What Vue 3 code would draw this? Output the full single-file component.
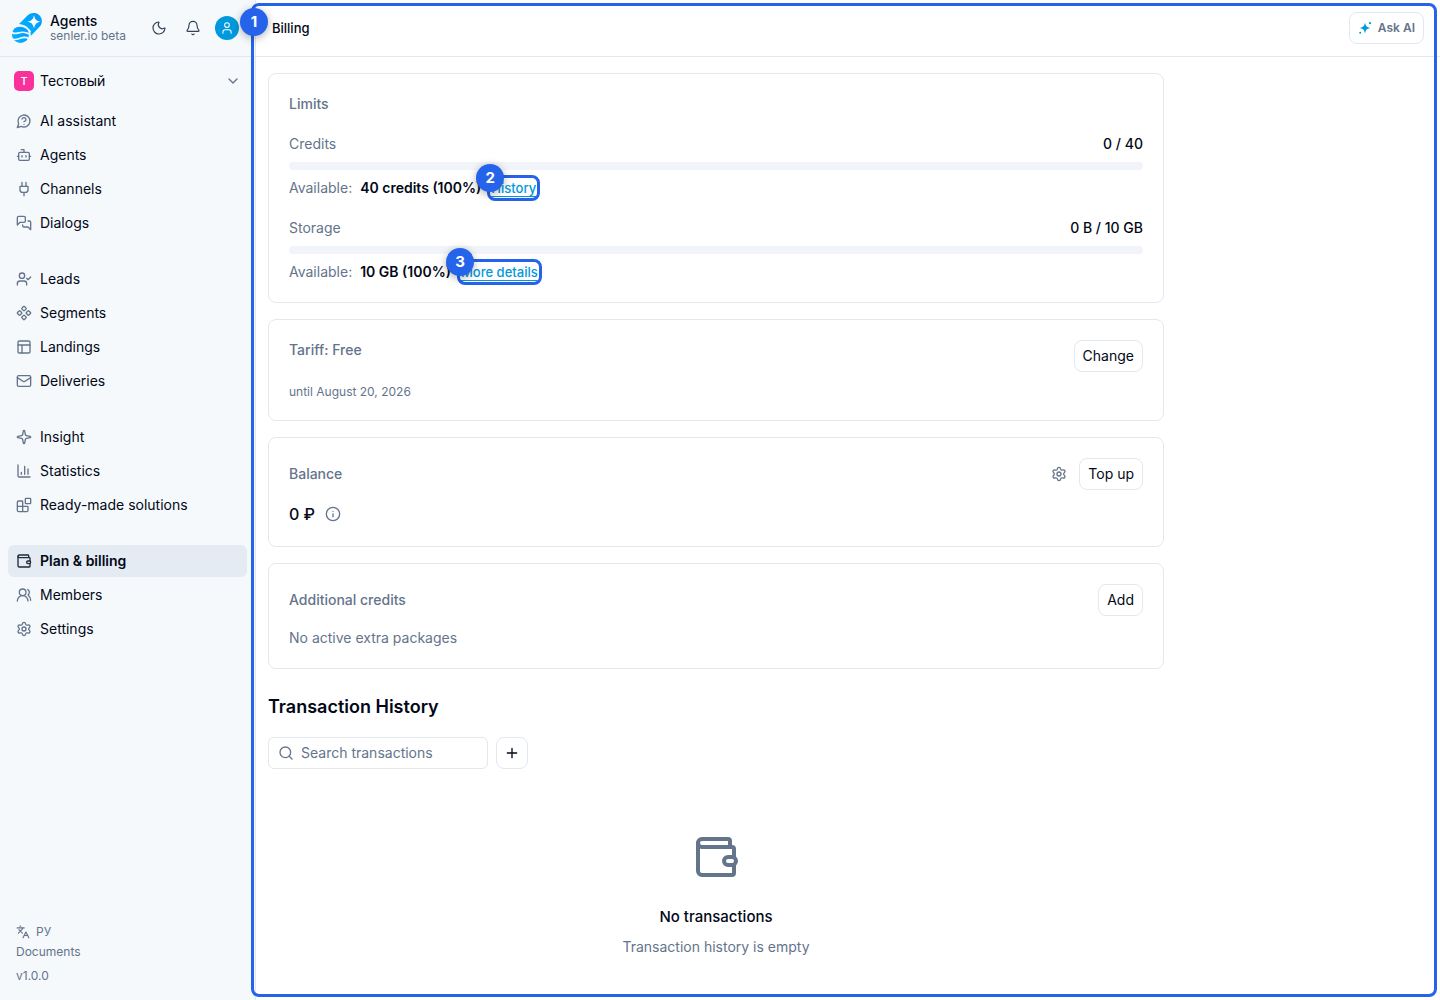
<script setup>
import { ref } from 'vue';

const search = ref('');

const icons = {
  assistant: '<path d="M7.9 20A9 9 0 1 0 4 16.1L2 22Z"/><path d="M9.09 9a3 3 0 0 1 5.83 1c0 2-3 3-3 3"/><path d="M12 17h.01"/>',
  agents: '<path d="M12 8V4H8"/><rect width="16" height="12" x="4" y="8" rx="2"/><path d="M2 14h2M20 14h2M15 13v2M9 13v2"/>',
  channels: '<path d="M12 22v-5M9 8V2M15 8V2M18 8v5a4 4 0 0 1-4 4h-4a4 4 0 0 1-4-4V8Z"/>',
  dialogs: '<path d="M14 9a2 2 0 0 1-2 2H6l-4 4V4a2 2 0 0 1 2-2h8a2 2 0 0 1 2 2z"/><path d="M18 9h2a2 2 0 0 1 2 2v11l-4-4h-6a2 2 0 0 1-2-2v-1"/>',
  leads: '<path d="m16 11 2 2 4-4M16 21v-2a4 4 0 0 0-4-4H6a4 4 0 0 0-4 4v2"/><circle cx="9" cy="7" r="4"/>',
  segments: '<path d="M15.536 11.293a1 1 0 0 0 0 1.414l2.376 2.377a1 1 0 0 0 1.414 0l2.377-2.377a1 1 0 0 0 0-1.414l-2.377-2.377a1 1 0 0 0-1.414 0zM2.297 11.293a1 1 0 0 0 0 1.414l2.377 2.377a1 1 0 0 0 1.414 0l2.377-2.377a1 1 0 0 0 0-1.414L6.088 8.916a1 1 0 0 0-1.414 0zM8.916 17.912a1 1 0 0 0 0 1.415l2.377 2.376a1 1 0 0 0 1.414 0l2.377-2.376a1 1 0 0 0 0-1.415l-2.377-2.376a1 1 0 0 0-1.414 0zM8.916 4.674a1 1 0 0 0 0 1.414l2.377 2.376a1 1 0 0 0 1.414 0l2.377-2.376a1 1 0 0 0 0-1.414l-2.377-2.377a1 1 0 0 0-1.414 0z"/>',
  landings: '<rect width="18" height="18" x="3" y="3" rx="2"/><path d="M3 9h18M9 21V9"/>',
  deliveries: '<rect width="20" height="16" x="2" y="4" rx="2"/><path d="m22 7-8.97 5.7a1.94 1.94 0 0 1-2.06 0L2 7"/>',
  insight: '<path d="M11.017 2.814a1 1 0 0 1 1.966 0l1.051 5.558a2 2 0 0 0 1.594 1.594l5.558 1.051a1 1 0 0 1 0 1.966l-5.558 1.051a2 2 0 0 0-1.594 1.594l-1.051 5.558a1 1 0 0 1-1.966 0l-1.051-5.558a2 2 0 0 0-1.594-1.594l-5.558-1.051a1 1 0 0 1 0-1.966l5.558-1.051a2 2 0 0 0 1.594-1.594z"/>',
  statistics: '<path d="M3 3v16a2 2 0 0 0 2 2h16M13 17V5M18 17V9M8 17v-3"/>',
  solutions: '<path d="M10 22V7a1 1 0 0 0-1-1H4a2 2 0 0 0-2 2v12a2 2 0 0 0 2 2h12a2 2 0 0 0 2-2v-5a1 1 0 0 0-1-1H2"/><rect width="8" height="8" x="14" y="2" rx="1"/>',
  wallet: '<path d="M21 12V8a1 1 0 0 0-1-1H5a2 2 0 0 1 0-4h13a1 1 0 0 1 1 1v3"/><path d="M3 5v14a2 2 0 0 0 2 2h15a1 1 0 0 0 1-1v-4"/><rect width="6" height="4" x="16" y="12" rx="2"/>',
  members: '<path d="M18 21a8 8 0 0 0-16 0"/><circle cx="10" cy="8" r="5"/><path d="M22 20c0-3.37-2-6.5-4-8a5 5 0 0 0-.45-8.3"/>',
  settings: '<path d="M9.671 4.136a2.34 2.34 0 0 1 4.659 0 2.34 2.34 0 0 0 3.319 1.915 2.34 2.34 0 0 1 2.33 4.033 2.34 2.34 0 0 0 0 3.831 2.34 2.34 0 0 1-2.33 4.033 2.34 2.34 0 0 0-3.319 1.915 2.34 2.34 0 0 1-4.659 0 2.34 2.34 0 0 0-3.32-1.915 2.34 2.34 0 0 1-2.33-4.033 2.34 2.34 0 0 0 0-3.831A2.34 2.34 0 0 1 6.35 6.051a2.34 2.34 0 0 0 3.319-1.915"/><circle cx="12" cy="12" r="3"/>',
};

const navGroups = [
  [
    { label: 'AI assistant', icon: 'assistant' },
    { label: 'Agents', icon: 'agents' },
    { label: 'Channels', icon: 'channels' },
    { label: 'Dialogs', icon: 'dialogs' },
  ],
  [
    { label: 'Leads', icon: 'leads' },
    { label: 'Segments', icon: 'segments' },
    { label: 'Landings', icon: 'landings' },
    { label: 'Deliveries', icon: 'deliveries' },
  ],
  [
    { label: 'Insight', icon: 'insight' },
    { label: 'Statistics', icon: 'statistics' },
    { label: 'Ready-made solutions', icon: 'solutions' },
  ],
  [
    { label: 'Plan & billing', icon: 'wallet', active: true },
    { label: 'Members', icon: 'members' },
    { label: 'Settings', icon: 'settings' },
  ],
];

const limits = [
  { name: 'Credits', value: '0 / 40', used: 0, available: '40 credits (100%)', link: 'History', mark: 2 },
  { name: 'Storage', value: '0 B / 10 GB', used: 0, available: '10 GB (100%)', link: 'More details', mark: 3 },
];
</script>

<template>
  <div class="layout">
    <aside class="sidebar">
      <div class="brand">
        <svg class="logo" viewBox="0 0 30 30" aria-hidden="true">
          <defs>
            <linearGradient id="logo-fill" x1="0" y1="1" x2="1" y2="0">
              <stop offset="0" stop-color="#00b7ff" />
              <stop offset="1" stop-color="#0098ff" />
            </linearGradient>
          </defs>
          <path fill="url(#logo-fill)" d="M7 11 15 3C18-.3 23-.8 26.400 1.600c4 2.800 4.600 8.300 1.400 12L18.800 23c.4-6-3.800-11.500-11.800-12Z" />
          <circle cx="8.500" cy="21.500" r="8.500" fill="url(#logo-fill)" />
          <path d="M1 14.500c5.500-3 13.500-2 17.500 4.500M-.5 19.500c5 3.500 10-3.500 17.500 1.500M0 26c6 2.500 10-4.500 17-.5" fill="none" stroke="#f6f9fc" stroke-width="1.600" />
          <path fill="#fff" d="M22 2c.9 4.600 2.300 6 6.800 6.800-4.500.9-5.900 2.300-6.800 6.800-.9-4.500-2.300-5.900-6.800-6.800 4.500-.8 5.900-2.200 6.800-6.800Z" />
        </svg>
        <div class="brand-text">
          <strong>Agents</strong>
          <span>senler.io beta</span>
        </div>
        <div class="brand-actions">
          <button type="button" class="icon-btn" aria-label="Theme">
            <svg class="icon" viewBox="0 0 24 24"><path d="M20.985 12.486a9 9 0 1 1-9.473-9.472c.405-.022.617.46.402.803a6 6 0 0 0 8.268 8.268c.344-.215.825-.004.803.401" /></svg>
          </button>
          <button type="button" class="icon-btn" aria-label="Notifications">
            <svg class="icon" viewBox="0 0 24 24"><path d="M10.268 21a2 2 0 0 0 3.464 0M3.262 15.326A1 1 0 0 0 4 17h16a1 1 0 0 0 .74-1.673C19.41 13.956 18 12.499 18 8A6 6 0 0 0 6 8c0 4.499-1.411 5.956-2.738 7.326" /></svg>
          </button>
          <button type="button" class="avatar" aria-label="Profile">
            <svg class="icon" viewBox="0 0 24 24"><circle cx="12" cy="7" r="4" /><path d="M19 21v-2a4 4 0 0 0-4-4H9a4 4 0 0 0-4 4v2" /></svg>
          </button>
        </div>
      </div>

      <button type="button" class="workspace">
        <span class="workspace-badge">Т</span>
        <span>Тестовый</span>
        <svg class="icon chevron" viewBox="0 0 24 24"><path d="m6 9 6 6 6-6" /></svg>
      </button>

      <nav class="nav">
        <ul v-for="(group, i) in navGroups" :key="i">
          <li v-for="item in group" :key="item.label">
            <a href="#" class="nav-link" :class="{ active: item.active }">
              <svg class="icon" viewBox="0 0 24 24" v-html="icons[item.icon]"></svg>
              {{ item.label }}
            </a>
          </li>
        </ul>
      </nav>

      <div class="sidebar-footer">
        <button type="button" class="lang">
          <svg class="icon" viewBox="0 0 24 24"><path d="m5 8 6 6M4 14l6-6 2-3M2 5h12M7 2h1M22 22l-5-10-5 10M14 18h6" /></svg>
          РУ
        </button>
        <a href="#">Documents</a>
        <span>v1.0.0</span>
      </div>
    </aside>

    <main class="main">
      <div class="outline outline-page"><span class="mark mark-page">1</span></div>

      <header class="topbar">
        <h1>Billing</h1>
        <button type="button" class="btn ask">
          <svg class="ask-icon" viewBox="0 0 14 14">
            <path d="M7 1.500c.8 3.700 1.700 4.700 5.500 5.500-3.800.8-4.700 1.700-5.500 5.500-.8-3.800-1.700-4.700-5.500-5.500 3.800-.8 4.700-1.800 5.500-5.500Z" />
            <circle cx="12" cy="2.200" r="1.100" />
            <circle cx="2.200" cy="11.800" r="1" />
          </svg>
          Ask AI
        </button>
      </header>

      <div class="content">
        <section class="card limits">
          <h2>Limits</h2>
          <div v-for="limit in limits" :key="limit.name" class="limit">
            <div class="row">
              <span class="muted">{{ limit.name }}</span>
              <span class="value">{{ limit.value }}</span>
            </div>
            <div class="bar"><div class="bar-fill" :style="{ width: limit.used + '%' }"></div></div>
            <div class="available">
              <span class="muted">Available:</span>
              <strong>{{ limit.available }}</strong>
              <span class="marked">
                <a href="#">{{ limit.link }}</a>
                <span class="outline outline-link"><span class="mark">{{ limit.mark }}</span></span>
              </span>
            </div>
          </div>
        </section>

        <section class="card">
          <div class="row row-top">
            <h2>Tariff: Free</h2>
            <button type="button" class="btn">Change</button>
          </div>
          <p class="small">until August 20, 2026</p>
        </section>

        <section class="card">
          <div class="row">
            <h2>Balance</h2>
            <div class="row-actions">
              <button type="button" class="icon-btn muted" aria-label="Balance settings">
                <svg class="icon" viewBox="0 0 24 24" v-html="icons.settings"></svg>
              </button>
              <button type="button" class="btn">Top up</button>
            </div>
          </div>
          <div class="balance">
            <span>0 ₽</span>
            <svg class="icon" viewBox="0 0 24 24"><circle cx="12" cy="12" r="10" /><path d="M12 16v-4M12 8h.01" /></svg>
          </div>
        </section>

        <section class="card">
          <div class="row">
            <h2>Additional credits</h2>
            <button type="button" class="btn">Add</button>
          </div>
          <p>No active extra packages</p>
        </section>

        <section class="history">
          <h2>Transaction History</h2>
          <div class="filters">
            <label class="search">
              <svg class="icon" viewBox="0 0 24 24"><circle cx="11" cy="11" r="8" /><path d="m21 21-4.300-4.300" /></svg>
              <input v-model="search" type="text" placeholder="Search transactions" aria-label="Search transactions">
            </label>
            <button type="button" class="btn btn-square" aria-label="Add filter">
              <svg class="icon" viewBox="0 0 24 24"><path d="M5 12h14M12 5v14" /></svg>
            </button>
          </div>
          <div class="empty">
            <svg class="icon" viewBox="0 0 24 24" v-html="icons.wallet"></svg>
            <h3>No transactions</h3>
            <p>Transaction history is empty</p>
          </div>
        </section>
      </div>
    </main>
  </div>
</template>

<style>
body {
  margin: 0;
  background: #fff;
}
</style>

<style scoped>
* {
  box-sizing: border-box;
}

.layout {
  --text: #020817;
  --muted: #64748b;
  --border: #e2e8f0;
  --primary: #0099dd;
  --mark: #2563eb;
  display: flex;
  min-height: 100vh;
  font-family: Inter, "Liberation Sans", sans-serif;
  font-size: 14px;
  line-height: 20px;
  color: var(--text);
}

h1,
h2,
h3,
p,
ul {
  margin: 0;
  padding: 0;
}

ul {
  list-style: none;
}

button,
input {
  font: inherit;
  color: inherit;
}

button {
  padding: 0;
  border: 0;
  background: none;
  cursor: pointer;
}

a {
  color: inherit;
  text-decoration: none;
}

.icon {
  flex: none;
  width: 16px;
  height: 16px;
  fill: none;
  stroke: currentColor;
  stroke-width: 2;
  stroke-linecap: round;
  stroke-linejoin: round;
}

.muted {
  color: var(--muted);
}

.icon-btn {
  display: flex;
  align-items: center;
  justify-content: center;
  width: 32px;
  height: 32px;
}

/* sidebar */
.sidebar {
  display: flex;
  flex-direction: column;
  flex: none;
  width: 256px;
  background: #f6f9fc;
  border-right: 1px solid var(--border);
}

.brand {
  display: flex;
  align-items: center;
  height: 57px;
  padding: 0 16px 0 12px;
  border-bottom: 1px solid var(--border);
}

.logo {
  width: 30px;
  height: 30px;
  margin-right: 8px;
}

.brand-text {
  display: flex;
  flex-direction: column;
}

.brand-text strong {
  font-weight: 500;
  line-height: 16px;
}

.brand-text span {
  font-size: 12px;
  line-height: 14px;
  white-space: nowrap;
  color: var(--muted);
}

.brand-actions {
  display: flex;
  align-items: center;
  gap: 2px;
  margin-left: auto;
  color: #334155;
}

.brand-actions .icon {
  stroke-width: 1.75;
}

.avatar {
  display: flex;
  align-items: center;
  justify-content: center;
  width: 24px;
  height: 24px;
  margin-left: 4px;
  border-radius: 50%;
  background: var(--primary);
  color: #fff;
}

.avatar .icon {
  width: 14px;
  height: 14px;
}

.workspace {
  display: flex;
  align-items: center;
  gap: 6px;
  height: 32px;
  margin: 8px;
  padding: 0 6px;
}

.workspace-badge {
  width: 20px;
  border-radius: 5px;
  background: #f9329b;
  color: #fff;
  font-size: 10px;
  font-weight: 600;
}

.chevron {
  margin-left: auto;
  color: var(--muted);
}

.nav {
  display: flex;
  flex-direction: column;
  gap: 24px;
  padding: 0 8px;
}

.nav ul {
  display: flex;
  flex-direction: column;
  gap: 2px;
}

.nav-link {
  display: flex;
  align-items: center;
  gap: 8px;
  height: 32px;
  padding: 0 8px;
  border-radius: 6px;
}

.nav-link .icon {
  color: var(--muted);
}

.nav-link.active {
  background: #e4ebf2;
  font-weight: 600;
}

.nav-link.active .icon {
  color: #1e293b;
}

.sidebar-footer {
  display: flex;
  flex-direction: column;
  align-items: flex-start;
  margin-top: auto;
  padding: 0 16px 12px;
  font-size: 12px;
  line-height: 24px;
  color: var(--muted);
}

.lang {
  display: flex;
  align-items: center;
  gap: 6px;
  line-height: 16px;
}

.lang .icon {
  width: 14px;
  height: 14px;
}

/* main */
.main {
  position: relative;
  flex: 1;
  min-width: 0;
}

.topbar {
  display: flex;
  align-items: center;
  justify-content: space-between;
  height: 57px;
  padding: 0 16px;
  border-bottom: 1px solid var(--border);
}

.topbar h1 {
  font-size: 13px;
  font-weight: 500;
}

.btn {
  display: flex;
  align-items: center;
  justify-content: center;
  height: 32px;
  padding: 0 8px;
  border: 1px solid var(--border);
  border-radius: 8px;
}

.btn-square {
  width: 32px;
}

.ask {
  gap: 6px;
  font-size: 12px;
  font-weight: 600;
  color: var(--muted);
}

.ask-icon {
  width: 14px;
  height: 14px;
  fill: var(--primary);
}

.content {
  display: flex;
  flex-direction: column;
  gap: 16px;
  max-width: 920px;
  padding: 16px 12px;
}

.card {
  display: flex;
  flex-direction: column;
  gap: 12px;
  padding: 20px;
  border: 1px solid var(--border);
  border-radius: 8px;
  color: var(--muted);
}

.card h2 {
  font-size: 14px;
  font-weight: 500;
}

.card .btn,
.value,
.available strong,
.balance span {
  color: var(--text);
}

.limits {
  gap: 20px;
}

.limit {
  display: flex;
  flex-direction: column;
  gap: 8px;
}

.row {
  display: flex;
  align-items: center;
  justify-content: space-between;
}

.row-top {
  align-items: flex-start;
}

.row-actions {
  display: flex;
  gap: 4px;
}

.value {
  font-weight: 500;
}

.bar {
  height: 8px;
  border-radius: 4px;
  background: #f1f5f9;
  overflow: hidden;
}

.bar-fill {
  height: 100%;
  background: var(--primary);
}

.available {
  display: flex;
  align-items: center;
  gap: 8px;
}

.available strong {
  font-weight: 600;
}

.available a {
  display: block;
  font-size: 13px;
  font-weight: 500;
  line-height: 18px;
  color: var(--primary);
  text-decoration: underline;
  text-underline-offset: 3px;
}

.small {
  font-size: 12px;
  line-height: 16px;
}

.balance {
  display: flex;
  align-items: center;
  gap: 10px;
  font-size: 16px;
  font-weight: 500;
  line-height: 24px;
}

.history {
  display: flex;
  flex-direction: column;
  gap: 16px;
  padding-top: 8px;
}

.history h2 {
  font-size: 18px;
  font-weight: 600;
  line-height: 28px;
}

.filters {
  display: flex;
  gap: 8px;
}

.search {
  display: flex;
  align-items: center;
  gap: 7px;
  width: 220px;
  height: 32px;
  padding: 0 9px;
  border: 1px solid var(--border);
  border-radius: 6px;
  color: var(--muted);
}

.search input {
  width: 100%;
  min-width: 0;
  padding: 0;
  border: 0;
  outline: 0;
  background: none;
}

.search input::placeholder {
  color: var(--muted);
  opacity: 1;
}

.empty {
  display: flex;
  flex-direction: column;
  align-items: center;
  padding-top: 48px;
  color: var(--muted);
}

.empty .icon {
  width: 48px;
  height: 48px;
  margin-bottom: 24px;
}

.empty h3 {
  margin-bottom: 8px;
  font-size: 15px;
  font-weight: 500;
  line-height: 24px;
  color: var(--text);
}

/* guide marks over the page */
.marked {
  position: relative;
  margin-left: 2px;
}

.outline {
  position: absolute;
  z-index: 2;
  border: 3px solid var(--mark);
  border-radius: 8px;
  pointer-events: none;
}

.outline-page {
  inset: 3px 3px 3px -5px;
}

.outline-link {
  inset: -4px;
}

.mark {
  position: absolute;
  top: -14px;
  left: -14px;
  width: 28px;
  height: 28px;
  border-radius: 50%;
  background: var(--mark);
  box-shadow: 0 2px 8px rgba(0, 0, 0, 0.3);
  color: #fff;
  font-size: 15px;
  font-weight: 700;
  line-height: 28px;
  text-align: center;
}

.mark-page {
  top: 2px;
}
</style>
